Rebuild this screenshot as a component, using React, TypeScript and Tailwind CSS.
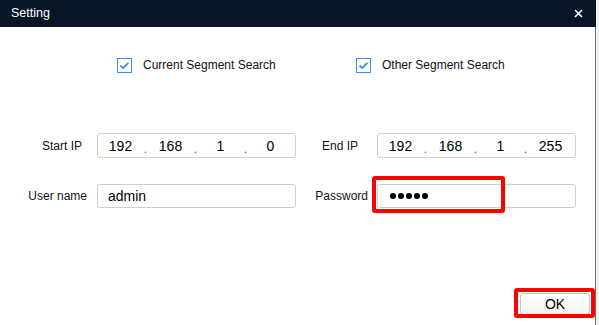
import React from 'react'

const font = { fontFamily: '"Liberation Sans", Arial, sans-serif' }

function CheckBox({ label }: { label: string }) {
  return (
    <div className="flex items-center w-[240px] h-[15px]">
      <div className="w-[15px] h-[15px] border border-[#3b8eea] bg-white flex items-center justify-center">
        <svg width="11" height="9" viewBox="0 0 11 9">
          <path d="M1.5 4.5 L4.2 7 L9.5 1.8" fill="none" stroke="#3b8eea" strokeWidth="1.8" />
        </svg>
      </div>
      <span className="ml-[11px] text-[12px] leading-[15px] text-[#111]">{label}</span>
    </div>
  )
}

function IpBox({ parts }: { parts: string[] }) {
  return (
    <div className="w-[199px] h-[25px] border border-[#cfcfcf] rounded-[3px] bg-white flex items-center text-[14px] leading-[16px] text-black">
      {parts.map((p, i) => (
        <React.Fragment key={i}>
          <span className="w-[45px] text-center">{p}</span>
          {i < 3 && <span className="w-[5px] text-center text-[#555] text-[12px] leading-[12px] mt-[6px]">.</span>}
        </React.Fragment>
      ))}
    </div>
  )
}

function Label({ text, w, pr }: { text: string; w: string; pr: string }) {
  return <div className={`${w} ${pr} text-right text-[12px] leading-[14px] text-[#111]`}>{text}</div>
}

export default function App() {
  return (
    <div className="w-[599px] h-[325px] bg-[#f2f2f2] flex" style={font}>
      <div className="w-[596px] h-full flex flex-col bg-white relative">
        <div className="h-[27px] bg-[#071526] flex items-center justify-between pl-[11px] pr-[13px] shrink-0">
          <span className="text-white text-[12.5px]">Setting</span>
          <svg width="9" height="9" viewBox="0 0 9 9">
            <path d="M1 1 L8 8 M8 1 L1 8" stroke="#fff" strokeWidth="1.6" />
          </svg>
        </div>

        <div className="flex-1 flex flex-col border-r border-[#6f6f6f]">
          <div className="flex mt-[31px] pl-[117px] h-[15px]">
            <CheckBox label="Current Segment Search" />
            <CheckBox label="Other Segment Search" />
          </div>

          <div className="flex items-center mt-[60px] h-[25px]">
            <Label text="Start IP" w="w-[97px]" pr="pr-[15px]" />
            <IpBox parts={['192', '168', '1', '0']} />
            <Label text="End IP" w="w-[81px]" pr="pr-[19px]" />
            <IpBox parts={['192', '168', '1', '255']} />
          </div>

          <div className="flex items-center mt-[26px] h-[24px]">
            <Label text="User name" w="w-[97px]" pr="pr-[10px]" />
            <div className="w-[199px] h-[24px] border border-[#cfcfcf] rounded-[3px] bg-white flex items-center pl-[10px] text-[14px] leading-[16px] text-black">
              admin
            </div>
            <Label text="Password" w="w-[81px]" pr="pr-[9px]" />
            <div className="w-[199px] h-[24px] border border-[#cfcfcf] rounded-[3px] bg-white flex items-center pl-[12px] gap-[2px]">
              {[0, 1, 2, 3, 4].map(i => (
                <span key={i} className="w-[6px] h-[6px] rounded-full bg-black" />
              ))}
            </div>
          </div>

          <div className="flex-1" />
          <div className="flex justify-end pr-[5px] pb-[10px]">
            <button className="w-[70px] h-[22px] border border-[#c6c6c6] rounded-[3px] bg-gradient-to-b from-white to-[#f4f4f4] text-[14px] text-black leading-none">
              OK
            </button>
          </div>
        </div>

        {/* annotation highlights */}
        <div className="absolute left-[372px] top-[176px] w-[133px] h-[37px] border-[4px] border-[#ff0000] rounded-[3px]" />
        <div className="absolute left-[514px] top-[288px] w-[81px] h-[30px] border-[4px] border-[#ff0000] rounded-[3px]" />
      </div>
    </div>
  )
}
